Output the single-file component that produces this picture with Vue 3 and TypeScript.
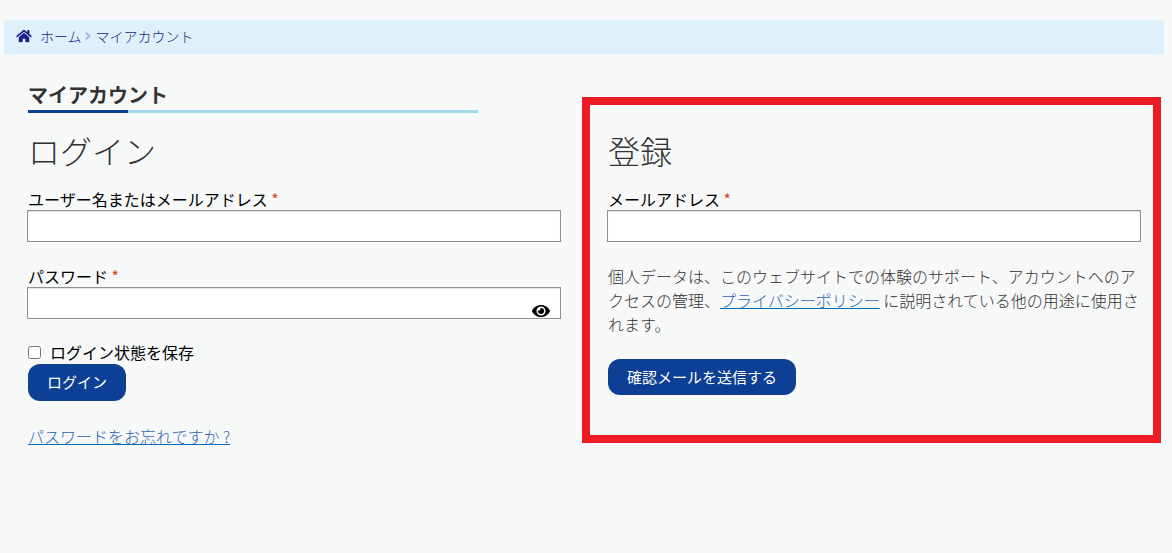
<script setup lang="ts">
import { ref } from 'vue'

const username = ref('')
const password = ref('')
const remember = ref(false)
const email = ref('')
const showPassword = ref(false)
</script>

<template>
  <div class="page">
    <nav class="breadcrumb" aria-label="パンくずリスト">
      <svg class="home" viewBox="0 0 576 512" aria-hidden="true">
        <path d="M280.37 148.26L96 300.11V464a16 16 0 0 0 16 16l112.06-.29a16 16 0 0 0 15.92-16V368a16 16 0 0 1 16-16h64a16 16 0 0 1 16 16v95.64a16 16 0 0 0 16 16.05L464 480a16 16 0 0 0 16-16V300L295.67 148.26a12.19 12.19 0 0 0-15.3 0zM571.6 251.47L488 182.56V44.05a12 12 0 0 0-12-12h-56a12 12 0 0 0-12 12v72.61L318.47 43a48 48 0 0 0-61 0L4.34 251.47a12 12 0 0 0-1.6 16.9l25.5 31A12 12 0 0 0 45.15 301l235.22-193.74a12.19 12.19 0 0 1 15.3 0L530.9 301a12 12 0 0 0 16.9-1.6l25.5-31a12 12 0 0 0-1.7-16.93z" />
      </svg>
      <a href="#">ホーム</a>
      <svg class="chevron" viewBox="0 0 6 8" aria-hidden="true"><path d="M1 0.7L4.4 4L1 7.3" /></svg>
      <span>マイアカウント</span>
    </nav>

    <main class="columns">
      <section class="login">
        <h1>マイアカウント</h1>
        <h2>ログイン</h2>
        <form @submit.prevent>
          <div class="field">
            <label for="username">ユーザー名またはメールアドレス <span class="required">*</span></label>
            <input id="username" v-model="username" class="text" type="text" autocomplete="username" />
          </div>
          <div class="field">
            <label for="password">パスワード <span class="required">*</span></label>
            <div class="password">
              <input id="password" v-model="password" class="text" :type="showPassword ? 'text' : 'password'" autocomplete="current-password" />
              <button class="eye" type="button" aria-label="パスワードを表示" @click="showPassword = !showPassword">
                <svg viewBox="0 0 576 384" aria-hidden="true">
                  <path d="M572.52 177.4C518.29 71.59 410.93 0 288 0S57.68 71.64 3.48 177.41a32.35 32.35 0 0 0 0 29.19C57.71 312.41 165.07 384 288 384s230.32-71.64 284.52-177.41a32.35 32.35 0 0 0 0-29.19zM288 336a144 144 0 1 1 144-144 143.93 143.93 0 0 1-144 144zm0-240a95.31 95.31 0 0 0-25.31 3.79 47.85 47.85 0 0 1-66.9 66.9A95.78 95.78 0 1 0 288 96z" />
                </svg>
              </button>
            </div>
          </div>
          <label class="remember"><input v-model="remember" type="checkbox" />ログイン状態を保存</label>
          <button class="submit login-submit" type="submit">ログイン</button>
        </form>
        <p class="lost"><a href="#">パスワードをお忘れですか ?</a></p>
      </section>

      <section class="register">
        <h2>登録</h2>
        <form @submit.prevent>
          <div class="field">
            <label for="email">メールアドレス <span class="required">*</span></label>
            <input id="email" v-model="email" class="text" type="email" autocomplete="email" />
          </div>
          <p class="privacy">個人データは、このウェブサイトでの体験のサポート、アカウントへのアクセスの管理、<a href="#">プライバシーポリシー</a> に説明されている他の用途に使用されます。</p>
          <button class="submit" type="submit">確認メールを送信する</button>
        </form>
      </section>
    </main>
  </div>
</template>

<style>
body {
  margin: 0;
  background: #f7f9f9;
}
</style>

<style scoped>
.page {
  padding-top: 20px;
  color: #333;
  font-family: "Noto Sans CJK JP", sans-serif;
  font-size: 16px;
  font-weight: 300;
  line-height: 24px;
}
.breadcrumb {
  display: flex;
  align-items: center;
  box-sizing: border-box;
  height: 34px;
  margin: 0 8px 0 4px;
  padding: 0 12px 2px;
  background: #def0fa;
  color: #1d2088;
  font-size: 14px;
}
.breadcrumb a {
  color: inherit;
  text-decoration: none;
}
.home {
  width: 16px;
  height: 14px;
  margin-right: 8px;
  fill: #1d2088;
}
.chevron {
  width: 6px;
  height: 8px;
  margin: 0 5px 0 3px;
  fill: none;
  stroke: #a9b7de;
  stroke-width: 2;
}
.columns {
  display: grid;
  grid-template-columns: minmax(0, 534fr) minmax(0, 579fr);
  gap: 21px;
  align-items: start;
  padding: 29px 11px 0 27px;
}
h1 {
  position: relative;
  max-width: 450px;
  margin: 0 1px 15px;
  padding-bottom: 3px;
  border-bottom: 3px solid #a3d7f0;
  font-size: 20px;
  font-weight: 700;
  line-height: 24px;
}
h1::after {
  content: "";
  position: absolute;
  left: 0;
  bottom: -3px;
  width: 100px;
  height: 3px;
  background: #0d3f94;
}
h2 {
  margin: 0 1px 16px;
  font-size: 32px;
  font-weight: 300;
  line-height: 44px;
}
.field {
  margin-bottom: 22px;
}
.field + .field {
  margin-top: 23px;
}
label {
  display: block;
  padding-left: 1px;
  color: #000;
  font-weight: 400;
  line-height: 22px;
}
.required {
  color: #e2401c;
}
.text {
  display: block;
  box-sizing: border-box;
  width: 100%;
  height: 32px;
  padding: 4px 8px;
  border: 1px solid #8f9191;
  border-radius: 0;
  background: #fff;
  box-shadow: inset 0 1px 1px rgba(0, 0, 0, 0.12);
  font: inherit;
}
.password {
  position: relative;
}
.eye {
  position: absolute;
  right: 11px;
  bottom: 2px;
  display: flex;
  padding: 0;
  border: 0;
  background: none;
}
.eye svg {
  width: 18px;
  height: 12px;
  fill: #000;
}
.remember {
  display: flex;
  align-items: center;
  margin-bottom: 1px;
}
.remember input {
  width: 13px;
  height: 13px;
  margin: 0 9px 0 0;
}
.submit {
  display: block;
  height: 36px;
  margin: 0 1px;
  padding: 0 19px 2px;
  border: 0;
  border-radius: 12px;
  background: #0d3f94;
  color: #fff;
  font-family: inherit;
  font-size: 15px;
  font-weight: 400;
}
.login-submit {
  height: 37px;
}
.lost {
  margin: 23px 1px 0;
}
.lost a,
.privacy a {
  color: #2a66b4;
  text-decoration: underline #0b6bb8;
}
.register {
  margin-top: 14px;
  padding: 23px 12px 40px 17px;
  border: 8px solid #ed1c24;
}
.privacy {
  margin: 0 1px 23px;
}
</style>
